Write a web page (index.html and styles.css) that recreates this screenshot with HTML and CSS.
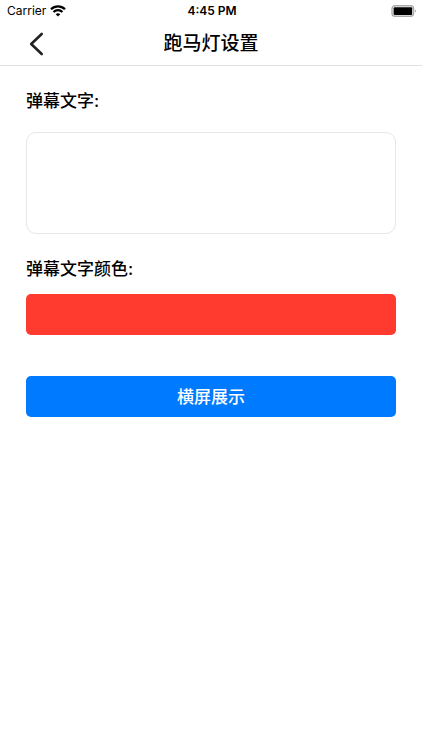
FILE: index.html
```html
<!DOCTYPE html>
<html lang="zh-CN">
<head>
<meta charset="utf-8">
<meta name="viewport" content="width=device-width, initial-scale=1">
<title>跑马灯设置</title>
<link rel="stylesheet" href="styles.css">
</head>
<body>
<div class="status">
  <div class="carrier">
    <span>Carrier</span>
    <svg class="wifi" viewBox="0 0 16 12" aria-hidden="true">
      <path d="M1 4.3A10 10 0 0 1 15 4.3" fill="none" stroke="#000" stroke-width="2.3"/>
      <path d="M3.5 7A6.3 6.3 0 0 1 12.5 7" fill="none" stroke="#000" stroke-width="2.1"/>
      <path d="M5.7 9.2A3.4 3.4 0 0 1 10.3 9.2L8 11.5Z"/>
    </svg>
  </div>
  <time class="clock">4:45 PM</time>
  <svg class="battery" viewBox="0 0 26 12" aria-hidden="true">
    <rect x="1" y="0.8" width="21.6" height="10.4" rx="3" fill="none" stroke="#aaa" stroke-width="1.4"/>
    <rect x="2.6" y="2.2" width="18.6" height="7.8" rx="1"/>
    <path d="M24.2 4.4Q25.8 6 24.2 7.6Z" fill="#777"/>
  </svg>
</div>
<header class="nav">
  <button class="back" type="button" aria-label="返回">
    <svg viewBox="0 0 16 26" aria-hidden="true"><path d="M13.7 3L3.2 13L13.7 23" fill="none" stroke="#222" stroke-width="2.6" stroke-linecap="round" stroke-linejoin="round"/></svg>
  </button>
  <h1 class="title">跑马灯设置</h1>
</header>
<main class="form">
  <label class="label" for="text">弹幕文字:</label>
  <textarea class="text" id="text"></textarea>
  <label class="label" for="color">弹幕文字颜色:</label>
  <button class="bar color" id="color" type="button"></button>
  <button class="bar show" type="button">横屏展示</button>
</main>
</body>
</html>
```
FILE: styles.css
```css
* {
  box-sizing: border-box;
}

body {
  margin: 0;
  background: #fff;
  color: #000;
  font-family: Inter, "Noto Sans CJK SC", sans-serif;
}

.status {
  display: grid;
  grid-template-columns: 1fr auto 1fr;
  align-items: center;
  height: 22px;
  padding: 0 5px 0 7px;
  font-size: 12px;
  line-height: 14px;
}

.carrier {
  display: flex;
  align-items: center;
  gap: 4px;
}

.wifi {
  width: 16px;
  height: 12px;
}

.clock {
  font-weight: 600;
}

.battery {
  width: 26px;
  height: 12px;
  justify-self: end;
}

.nav {
  display: grid;
  grid-template-columns: 72px 1fr 72px;
  align-items: center;
  height: 44px;
  border-bottom: 1px solid #e0e0e0;
}

.back {
  display: flex;
  justify-content: center;
  padding: 0;
  border: 0;
  background: none;
}

.back svg {
  width: 16px;
  height: 26px;
}

.title {
  margin: 0;
  font-size: 19px;
  font-weight: 500;
  line-height: 24px;
  text-align: center;
}

.form {
  display: flex;
  flex-direction: column;
  padding: 24px 26px;
}

.label {
  font-size: 17px;
  font-weight: 500;
  line-height: 22px;
}

.text {
  height: 102px;
  margin: 20px 0 24px;
  padding: 10px;
  border: 1px solid #e6e6e6;
  border-radius: 10px;
  background: #fff;
  font: inherit;
  resize: none;
}

.bar {
  height: 41px;
  padding: 0 0 2px;
  border: 0;
  border-radius: 5px;
  color: #fff;
  font: inherit;
  font-size: 17px;
  font-weight: 500;
}

.color {
  margin: 14px 0 41px;
  background: #ff3b30;
}

.show {
  background: #007aff;
}
```
